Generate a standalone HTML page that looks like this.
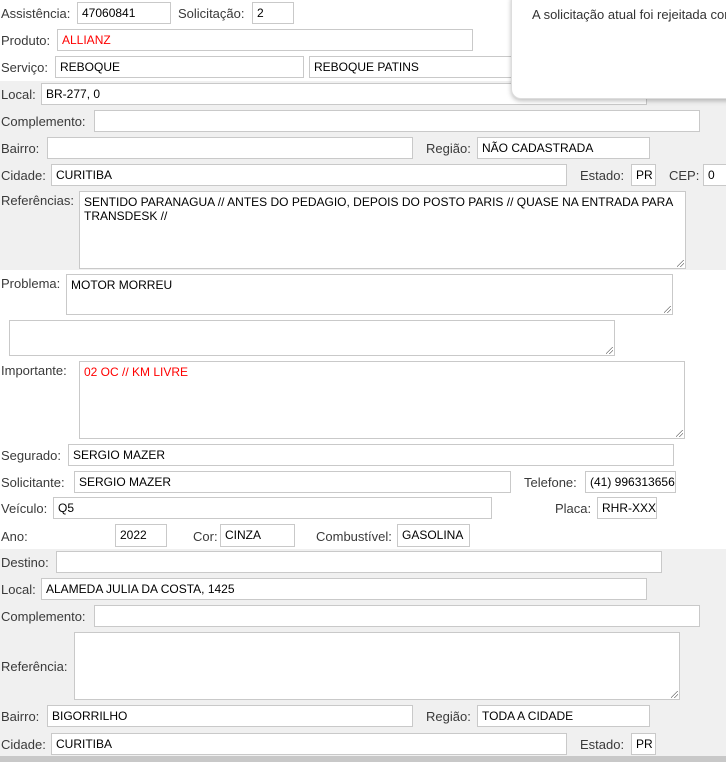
<!DOCTYPE html>
<html><head><meta charset="utf-8"><style>
body{margin:0;width:726px;height:762px;position:relative;overflow:hidden;background:#fff;font-family:"Liberation Sans",sans-serif;}
.bg{position:absolute;left:0;width:726px;background:#f0f0f0}
.l{position:absolute;font-size:13px;color:#3a3a3a;white-space:nowrap;line-height:16px;margin-top:1px}
.i{position:absolute;box-sizing:border-box;border:1px solid #c9c9c9;background:#fff;font-size:12px;color:#000;padding:3px 0 0 4px;white-space:nowrap;overflow:hidden;line-height:14px}
.r{color:#f00}
.ta::after{content:"";position:absolute;right:1px;bottom:1px;width:7px;height:7px;background:linear-gradient(135deg,transparent 45%,#777 45%,#777 52%,transparent 52%,transparent 70%,#777 70%,#777 77%,transparent 77%)}
</style></head><body>
<div class="bg" style="top:81px;height:189px"></div>
<div class="bg" style="top:549px;height:207px"></div>
<div class="bg" style="top:756px;height:6px;background:#c8c8c8"></div>

<div class="l" style="left:1px;top:5px">Assistência:</div>
<div class="i" style="left:77px;top:2px;width:94px;height:22px">47060841</div>
<div class="l" style="left:178px;top:5px">Solicitação:</div>
<div class="i" style="left:252px;top:2px;width:42px;height:22px">2</div>

<div class="l" style="left:1px;top:32px">Produto:</div>
<div class="i r" style="left:57px;top:29px;width:416px;height:22px">ALLIANZ</div>

<div class="l" style="left:1px;top:59px">Serviço:</div>
<div class="i" style="left:55px;top:56px;width:249px;height:22px">REBOQUE</div>
<div class="i" style="left:309px;top:56px;width:260px;height:22px">REBOQUE PATINS</div>

<div class="l" style="left:1px;top:86px">Local:</div>
<div class="i" style="left:41px;top:83px;width:606px;height:22px">BR-277, 0</div>

<div class="l" style="left:1px;top:113px">Complemento:</div>
<div class="i" style="left:94px;top:110px;width:606px;height:22px"></div>

<div class="l" style="left:1px;top:140px">Bairro:</div>
<div class="i" style="left:47px;top:137px;width:366px;height:22px"></div>
<div class="l" style="left:426px;top:140px">Região:</div>
<div class="i" style="left:477px;top:137px;width:173px;height:22px">NÃO CADASTRADA</div>

<div class="l" style="left:1px;top:167px">Cidade:</div>
<div class="i" style="left:51px;top:164px;width:516px;height:22px">CURITIBA</div>
<div class="l" style="left:580px;top:167px">Estado:</div>
<div class="i" style="left:631px;top:164px;width:25px;height:22px">PR</div>
<div class="l" style="left:669px;top:167px">CEP:</div>
<div class="i" style="left:703px;top:164px;width:30px;height:22px">0</div>

<div class="l" style="left:1px;top:192px">Referências:</div>
<div class="i ta" style="left:79px;top:191px;width:607px;height:78px;white-space:normal">SENTIDO PARANAGUA // ANTES DO PEDAGIO, DEPOIS DO POSTO PARIS // QUASE NA ENTRADA PARA TRANSDESK //</div>

<div class="l" style="left:1px;top:275px">Problema:</div>
<div class="i ta" style="left:66px;top:274px;width:607px;height:41px">MOTOR MORREU</div>
<div class="i ta" style="left:9px;top:320px;width:606px;height:36px"></div>

<div class="l" style="left:1px;top:362px">Importante:</div>
<div class="i ta r" style="left:79px;top:361px;width:606px;height:78px">02 OC // KM LIVRE</div>

<div class="l" style="left:1px;top:447px">Segurado:</div>
<div class="i" style="left:68px;top:444px;width:606px;height:22px">SERGIO MAZER</div>

<div class="l" style="left:1px;top:474px">Solicitante:</div>
<div class="i" style="left:74px;top:471px;width:437px;height:22px">SERGIO MAZER</div>
<div class="l" style="left:524px;top:474px">Telefone:</div>
<div class="i" style="left:585px;top:471px;width:91px;height:22px">(41) 996313656</div>

<div class="l" style="left:1px;top:500px">Veículo:</div>
<div class="i" style="left:53px;top:497px;width:439px;height:22px">Q5</div>
<div class="l" style="left:555px;top:500px">Placa:</div>
<div class="i" style="left:597px;top:497px;width:60px;height:22px">RHR-XXXX</div>

<div class="l" style="left:1px;top:528px">Ano:</div>
<div class="i" style="left:115px;top:524px;width:52px;height:23px">2022</div>
<div class="l" style="left:193px;top:528px">Cor:</div>
<div class="i" style="left:220px;top:524px;width:75px;height:23px">CINZA</div>
<div class="l" style="left:316px;top:528px">Combustível:</div>
<div class="i" style="left:397px;top:524px;width:73px;height:23px">GASOLINA</div>

<div class="l" style="left:1px;top:554px">Destino:</div>
<div class="i" style="left:56px;top:551px;width:606px;height:22px"></div>
<div class="l" style="left:1px;top:581px">Local:</div>
<div class="i" style="left:41px;top:578px;width:606px;height:22px">ALAMEDA JULIA DA COSTA, 1425</div>
<div class="l" style="left:1px;top:608px">Complemento:</div>
<div class="i" style="left:94px;top:605px;width:606px;height:22px"></div>
<div class="l" style="left:1px;top:658px">Referência:</div>
<div class="i ta" style="left:74px;top:632px;width:606px;height:68px"></div>
<div class="l" style="left:1px;top:708px">Bairro:</div>
<div class="i" style="left:47px;top:705px;width:366px;height:22px">BIGORRILHO</div>
<div class="l" style="left:426px;top:708px">Região:</div>
<div class="i" style="left:477px;top:705px;width:173px;height:22px">TODA A CIDADE</div>
<div class="l" style="left:1px;top:736px">Cidade:</div>
<div class="i" style="left:51px;top:733px;width:516px;height:22px">CURITIBA</div>
<div class="l" style="left:580px;top:736px">Estado:</div>
<div class="i" style="left:631px;top:733px;width:25px;height:22px">PR</div>

<div style="position:absolute;left:511px;top:-10px;width:240px;height:107px;background:#fff;border:1px solid #ddd;border-radius:10px;box-shadow:0 2px 5px rgba(0,0,0,.25)"></div>
<div class="l" style="left:532px;top:6px;color:#333">A solicitação atual foi rejeitada com</div>
</body></html>
